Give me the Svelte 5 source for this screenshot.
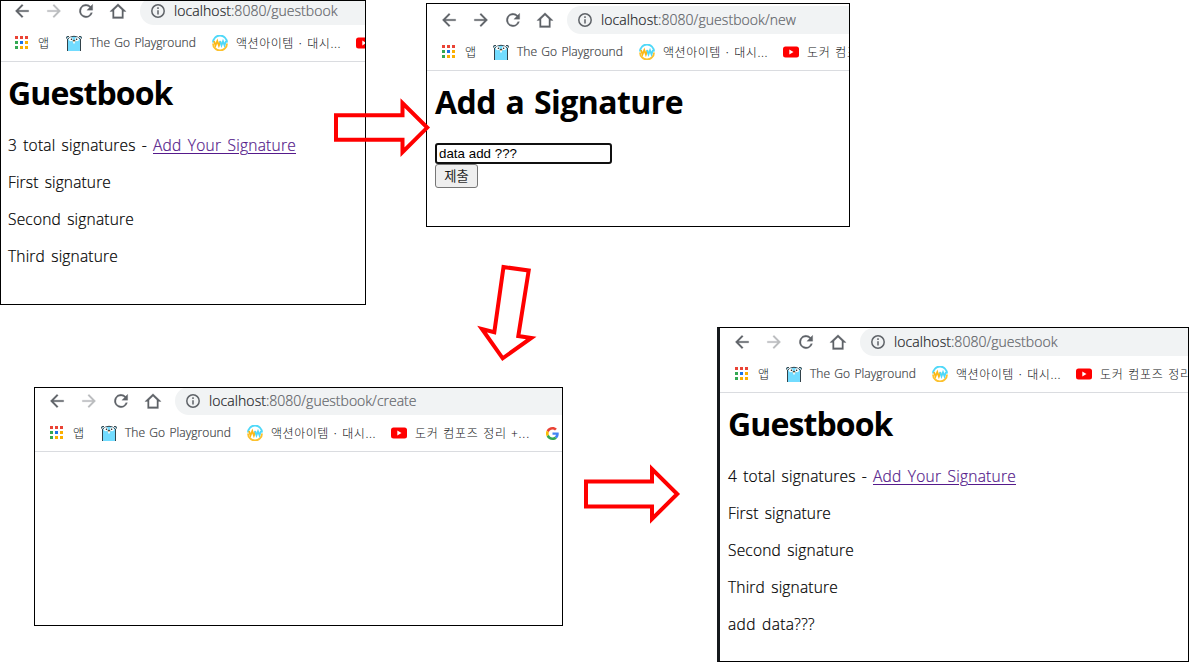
<script>
  const windows = [
    { id: 'list', path: '/guestbook', pathWidth: 106.5, heading: 'Guestbook', headingWidth: 164.5, total: 3, forward: false,
      entries: [['First signature', 103], ['Second signature', 126], ['Third signature', 110]] },
    { id: 'new', path: '/guestbook/new', pathWidth: 138, heading: 'Add a Signature', headingWidth: 248, forward: true, form: true },
    { id: 'create', path: '/guestbook/create', pathWidth: 150.5, forward: false },
    { id: 'result', path: '/guestbook', pathWidth: 106.5, heading: 'Guestbook', headingWidth: 164.5, total: 4, forward: false,
      entries: [['First signature', 103], ['Second signature', 126], ['Third signature', 110], ['add data???', 87]] }
  ];
  const arrows = [
    '336,115.3 402.5,115.3 402.5,103.1 427.2,127.6 402.5,152.1 402.5,139.8 336,139.8',
    '503.5,267 528.7,270.5 518.3,336 531.3,338 502.7,358.3 482,329 494.3,332.3',
    '586,481.5 652,481.5 652,469 677.2,494 652,519 652,506.4 586,506.4'
  ];
  const apps = ['#ea4335', '#ea4335', '#ea4335', '#34a853', '#1a73e8', '#fbaf00', '#34a853', '#fbaf00', '#fbaf00'];

  // Spreads the letters of a label evenly over the given width.
  function fit(node, width) {
    const natural = node.getBoundingClientRect().width;
    node.style.letterSpacing = `${(width - natural) / node.textContent.length}px`;
  }
</script>

<main>
  {#each windows as w}
    <section class="window {w.id}">
      <div class="inner">
        <div class="toolbar">
          <svg class="nav" viewBox="0 0 24 24"><path d="M20 11H7.8l5.6-5.6L12 4l-8 8 8 8 1.4-1.4L7.8 13H20z" /></svg>
          <svg class="nav" class:off={!w.forward} viewBox="0 0 24 24"><path d="M12 4l-1.4 1.4 5.6 5.6H4v2h12.200l-5.600 5.600L12 20l8-8z" /></svg>
          <svg class="nav" viewBox="0 0 24 24"><path d="M17.650 6.350A8 8 0 1 0 19.730 14h-2.080A6 6 0 1 1 12 6c1.660 0 3.140.69 4.220 1.780L13 11h7V4z" /></svg>
          <svg class="nav" viewBox="0 0 24 24"><path d="M12 3.200L2.200 12.600h3.300V21h13v-8.400h3.300zM7.300 19v-8.200L12 6.300l4.700 4.500V19z" /></svg>
          <div class="address">
            <svg class="info" viewBox="0 0 14 14"><circle cx="7" cy="7" r="6.200" /><path d="M7 6.200v4.300M7 3.300v1.600" /></svg>
            <span class="host" use:fit={57}>localhost</span><span class="path" use:fit={w.pathWidth}>:8080{w.path}</span>
          </div>
        </div>
        <div class="bookmarks">
          <span class="grid">{#each apps as c}<i style:background={c}></i>{/each}</span>
          <span class="label app">앱</span>
          <svg class="gopher" viewBox="0 0 16 16">
            <path d="M1.500 16V4Q8-1.500 14.500 4V16" fill="#72dcff" stroke="#32424a" />
            <path d="M.5 3.500Q0 .8 3 1.500M13 1.500q3-.7 2.500 2" fill="#72dcff" stroke="#32424a" />
            <circle cx="4.800" cy="4.200" r="2" fill="#fff" /><circle cx="11" cy="4.200" r="2" fill="#fff" />
            <circle cx="5.500" cy="4.200" r=".8" fill="#222" /><circle cx="10.600" cy="4.200" r=".8" fill="#222" />
            <ellipse cx="8" cy="6.100" rx="1.700" ry="1" fill="#e3c29b" /><ellipse cx="8" cy="5.300" rx="1" ry=".6" fill="#222" />
            <path d="M7.200 7h1.600v1.500H7.200z" fill="#fff" />
          </svg>
          <span class="label go"><span use:fit={106}>The Go Playground</span></span>
          <svg class="mw" viewBox="0 0 16 16">
            <path d="M1 7.500A7 7 0 0 1 15 7.500" stroke="#4fd8f8" /><path d="M1 8.500A7 7 0 0 0 15 8.500" stroke="#fcc12d" />
            <path d="M2 6l1.500 4.500L5.300 6l1.600 4.500L8.500 6" stroke="#fcb815" /><path d="M8 6l1.500 4.300L11 6.300l1.500 4L14 6" stroke="#4fd8f8" />
          </svg>
          <span class="label action"><span use:fit={105}>액션아이템 · 대시...</span></span>
          <svg class="youtube" viewBox="0 0 16 12"><rect y=".5" width="16" height="11" rx="2.500" fill="#f00" /><path d="M6.300 3.600v4.800l4.200-2.400z" fill="#fff" /></svg>
          <span class="label docker"><span use:fit={115}>도커 컴포즈 정리 +...</span></span>
          <svg class="google" viewBox="0 0 48 48">
            <path fill="#ea4335" d="M24 9.500c3.540 0 6.710 1.220 9.210 3.600l6.850-6.850C35.900 2.380 30.470 0 24 0 14.620 0 6.510 5.380 2.560 13.220l7.980 6.190C12.430 13.720 17.740 9.500 24 9.500z" />
            <path fill="#4285f4" d="M46.980 24.550c0-1.570-.15-3.090-.38-4.550H24v9.020h12.940c-.58 2.960-2.260 5.480-4.780 7.180l7.730 6c4.510-4.180 7.090-10.360 7.090-17.650z" />
            <path fill="#fbbc05" d="M10.530 28.590A14.500 14.500 0 0 1 10.530 19.410l-7.980-6.190a24 24 0 0 0 0 21.560z" />
            <path fill="#34a853" d="M24 48c6.480 0 11.930-2.130 15.890-5.810l-7.730-6c-2.150 1.450-4.920 2.300-8.160 2.300-6.260 0-11.570-4.220-13.470-9.910l-7.980 6.190C6.510 42.620 14.620 48 24 48z" />
          </svg>
        </div>
        <div class="page">
          {#if w.heading}<h1><span use:fit={w.headingWidth}>{w.heading}</span></h1>{/if}
          {#if w.total}
            <p><span class="total"><span use:fit={139}>{w.total} total signatures -</span></span><a href="#new"><span use:fit={143}>Add Your Signature</span></a></p>
          {/if}
          {#each w.entries ?? [] as [name, width]}<p><span use:fit={width}>{name}</span></p>{/each}
          {#if w.form}
            <div class="field"><span use:fit={78}>data add ???</span></div>
            <button>제출</button>
          {/if}
        </div>
      </div>
    </section>
  {/each}
  <svg class="arrows" viewBox="0 0 1189 662">{#each arrows as points}<polygon {points} />{/each}</svg>
</main>

<style>
  :global(body) { margin: 0; background: #fff; }
  main { position: relative; width: 1189px; height: 662px; overflow: hidden; font-family: "Open Sans", "Noto Sans CJK KR", sans-serif; }
  .window { position: absolute; box-sizing: border-box; overflow: hidden; border: 1px solid #000; background: #fff; }
  .list { left: 0; top: 0; width: 366px; height: 305px; }
  .new { left: 426px; top: 3px; width: 424px; height: 224px; }
  .create { left: 34px; top: 387px; width: 529px; height: 239px; }
  .result { left: 717px; top: 327px; width: 472px; height: 335px; border-left: 3px solid #16191c; }
  .inner { width: 700px; }
  .list .inner { margin: -4px 0 0 -1px; }
  .new .inner { margin-top: 2px; }
  .create .inner { margin-top: -1px; }
  .toolbar { display: flex; align-items: center; height: 28px; padding-left: 12px; }
  .nav { flex: none; width: 20px; height: 20px; margin-right: 12px; fill: #5f6368; stroke: #5f6368; stroke-width: .3; }
  .nav.off { fill: #babcbe; stroke: #babcbe; }
  .address { display: flex; align-items: center; flex: 1; height: 28px; box-sizing: border-box; padding-left: 11px; border-radius: 14px 0 0 14px; background: #f1f3f4; font-size: 14px; font-weight: 350; line-height: 20px; color: #5f6368; white-space: pre; -webkit-text-stroke: .2px; }
  .info { width: 14px; height: 14px; margin-right: 9px; fill: none; stroke: #5f6368; stroke-width: 1.500; }
  .host { color: #202124; }
  .bookmarks { display: flex; align-items: center; height: 36px; padding-left: 15px; border-bottom: 1px solid #dadce0; white-space: pre; color: #3c4043; font-size: 12px; }
  .bookmarks > * { flex: none; }
  .grid { display: grid; grid-template-columns: repeat(3, 3px); gap: 2px; width: 13px; margin: -1px 10px 0 0; }
  .grid i { height: 3px; }
  .label { line-height: 18px; }
  .app, .action, .docker { font-family: "Noto Sans CJK KR", sans-serif; font-weight: 300; color: #101214; }
  .app { width: 28px; }
  .gopher { width: 16px; height: 16px; margin-right: 8px; }
  .go { width: 122px; word-spacing: 1px; font-weight: 350; -webkit-text-stroke: .2px; }
  .mw { width: 16px; height: 16px; margin-right: 8px; fill: none; stroke-width: 1.800; }
  .action { width: 120px; }
  .youtube { width: 16px; height: 12px; margin-right: 8px; }
  .docker { width: 131px; word-spacing: 1px; }
  .google { width: 13px; height: 13px; }
  .page { padding: 8px; font-size: 15.500px; font-weight: 350; line-height: 21px; color: #000; word-spacing: 2px; }
  h1 { margin: 1px 0 20px; font-size: 32px; line-height: 43px; font-weight: 700; white-space: nowrap; }
  p { display: flex; margin: 0 0 16px; padding-top: 1px; height: 20px; white-space: nowrap; -webkit-text-stroke: .2px; }
  .total { width: 145px; }
  a { color: #551a8b; text-decoration: underline; text-underline-offset: 2px; text-decoration-thickness: 1px; }
  .field { box-sizing: border-box; width: 177px; height: 21px; padding-left: 2px; border: 2px solid #101010; border-radius: 3px; font: 13.300px/17px "Liberation Sans", sans-serif; word-spacing: 0; }
  button { display: block; width: 43px; height: 24px; padding: 0; border: 1px solid #767676; border-radius: 3px; background: #efefef; color: #000; font: 300 13.300px/20px "Noto Sans CJK KR", sans-serif; -webkit-text-stroke: .2px; }
  .arrows { position: absolute; left: 0; top: 0; width: 1189px; height: 662px; fill: none; stroke: #f00; stroke-width: 4; stroke-miterlimit: 8; pointer-events: none; }
</style>
